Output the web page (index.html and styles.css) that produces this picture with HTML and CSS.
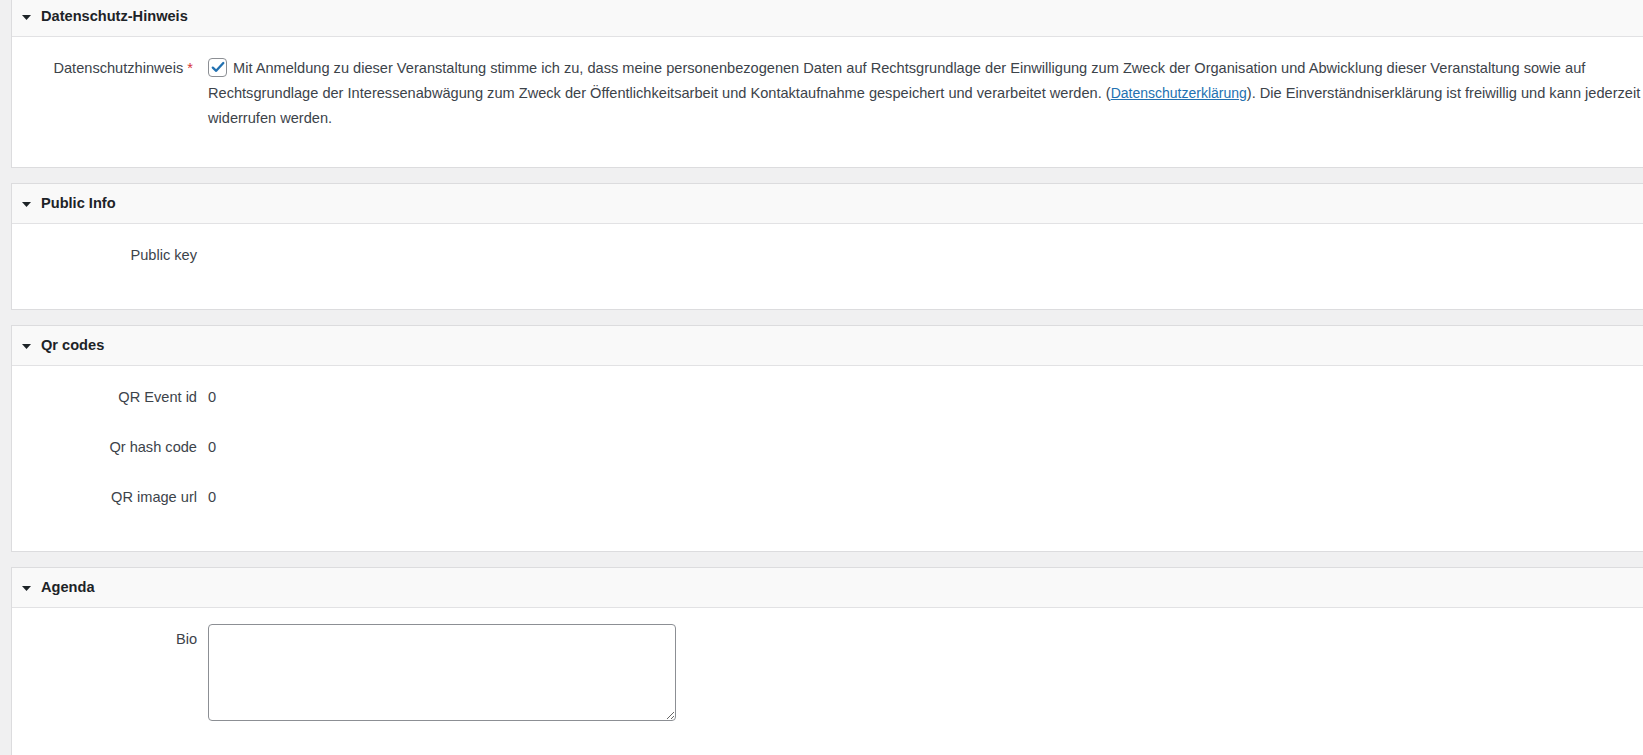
FILE: index.html
```html
<!DOCTYPE html>
<html lang="de">
<head>
<meta charset="utf-8">
<title>Metaboxen</title>
<link rel="stylesheet" href="styles.css">
</head>
<body>
<div class="page">
  <section class="box">
    <h2 class="box-head"><span class="toggle"><svg width="9" height="5" viewBox="0 0 9 5"><polygon points="0,0 9,0 4.5,5" fill="#1d2327"/></svg></span>Datenschutz-Hinweis</h2>
    <div class="box-body box-body--tight">
      <div class="row">
        <div class="label label--req">Datenschutzhinweis <span class="req">*</span></div>
        <div class="value"><span class="check"><svg width="14" height="12" viewBox="0 0 14 12"><path d="M1.8 6.6 L5.2 9.8 L12.3 2" fill="none" stroke="#2271b1" stroke-width="2.3" stroke-linecap="round" stroke-linejoin="round"/></svg></span>Mit Anmeldung zu dieser Veranstaltung stimme ich zu, dass meine personenbezogenen Daten auf Rechtsgrundlage der Einwilligung zum Zweck der Organisation und Abwicklung dieser Veranstaltung sowie auf Rechtsgrundlage der Interessenabwägung zum Zweck der Öffentlichkeitsarbeit und Kontaktaufnahme gespeichert und verarbeitet werden. (<a href="#" class="link">Datenschutzerklärung</a>). Die Einverständniserklärung ist freiwillig und kann jederzeit widerrufen werden.</div>
      </div>
    </div>
  </section>

  <section class="box">
    <h2 class="box-head"><span class="toggle"><svg width="9" height="5" viewBox="0 0 9 5"><polygon points="0,0 9,0 4.5,5" fill="#1d2327"/></svg></span>Public Info</h2>
    <div class="box-body">
      <div class="row">
        <div class="label">Public key</div>
        <div class="value"></div>
      </div>
    </div>
  </section>

  <section class="box">
    <h2 class="box-head"><span class="toggle"><svg width="9" height="5" viewBox="0 0 9 5"><polygon points="0,0 9,0 4.5,5" fill="#1d2327"/></svg></span>Qr codes</h2>
    <div class="box-body">
      <div class="row">
        <div class="label">QR Event id</div>
        <div class="value">0</div>
      </div>
      <div class="row">
        <div class="label">Qr hash code</div>
        <div class="value">0</div>
      </div>
      <div class="row">
        <div class="label">QR image url</div>
        <div class="value">0</div>
      </div>
    </div>
  </section>

  <section class="box">
    <h2 class="box-head"><span class="toggle"><svg width="9" height="5" viewBox="0 0 9 5"><polygon points="0,0 9,0 4.5,5" fill="#1d2327"/></svg></span>Agenda</h2>
    <div class="box-body">
      <div class="row">
        <div class="label">Bio</div>
        <div class="value"><textarea class="area"></textarea></div>
      </div>
    </div>
  </section>
</div>
</body>
</html>
```

FILE: styles.css
```css
html, body {
  margin: 0;
  padding: 0;
}

body {
  background: #f0f0f1;
  font-family: "Liberation Sans", Arial, sans-serif;
  font-size: 14.6px;
  color: #3c434a;
  overflow: hidden;
}

.page {
  margin-top: -4px;
  padding-left: 11px;
  margin-right: -50px;
}

.box {
  background: #fff;
  border: 1px solid #dcdcde;
  margin-bottom: 15px;
}

.box-head {
  margin: 0;
  height: 39px;
  line-height: 39px;
  background: #f9f9f9;
  border-bottom: 1px solid #e2e2e4;
  font-size: 14.6px;
  font-weight: bold;
  color: #1d2327;
  display: flex;
  align-items: center;
  padding-left: 10px;
}

.toggle {
  display: flex;
  align-items: center;
  width: 9px;
  margin-right: 10px;
  margin-top: 2px;
}

.box-body {
  padding: 7px 0 28px;
}

.box-body--tight {
  padding-bottom: 23px;
}

.row {
  display: grid;
  grid-template-columns: 185px 1fr;
  column-gap: 11px;
  padding: 12px 20px 13px 0;
  line-height: 25px;
}

.label {
  text-align: right;
  color: #3c434a;
}

.label--req {
  padding-right: 4px;
}

.req {
  color: #d63638;
}

.value {
  min-height: 25px;
}

.check {
  display: inline-flex;
  align-items: center;
  justify-content: center;
  box-sizing: border-box;
  width: 19px;
  height: 19px;
  border: 1px solid #8c8f94;
  border-radius: 4px;
  background: #fff;
  vertical-align: 0;
  margin-right: 6px;
}

.link {
  color: #2271b1;
  text-decoration: underline;
  font-size: 14px;
}

.area {
  display: block;
  box-sizing: border-box;
  width: 468px;
  height: 97px;
  margin-top: -3px;
  border: 1px solid #8c8f94;
  border-radius: 4px;
  background: #fff;
  font-family: inherit;
  font-size: 14px;
}
```
